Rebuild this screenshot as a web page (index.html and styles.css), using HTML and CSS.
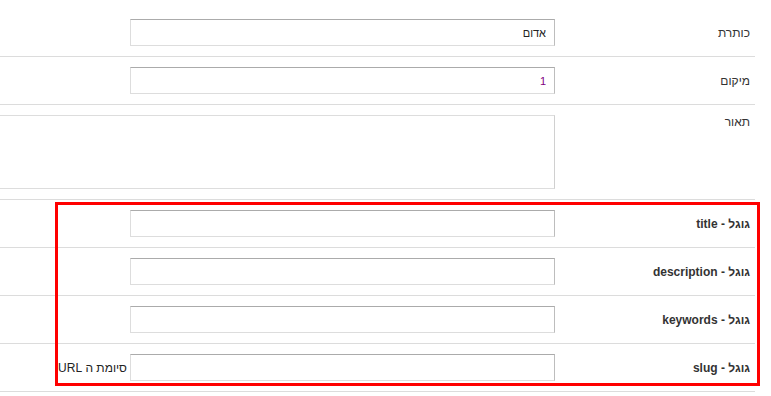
FILE: index.html
```html
<!DOCTYPE html>
<html lang="he">
<head>
  <meta charset="UTF-8" />
  <title>עריכת קטגוריה</title>
  <link rel="stylesheet" href="styles.css">
</head>
<body>
  <!-- Edit form -->
  <div class="form" dir="rtl">
    <div class="row">
      <div class="label">כותרת</div>
      <div class="field"><input class="text-input" type="text" value="אדום"></div>
    </div>
    <div class="row">
      <div class="label">מיקום</div>
      <div class="field"><input class="text-input num" type="text" value="1"></div>
    </div>
    <div class="row row-tall">
      <div class="label">תאור</div>
      <div class="field"><textarea class="text-area"></textarea></div>
    </div>

    <!-- Google SEO fields (highlighted) -->
    <div class="seo-group">
      <div class="row">
        <div class="label bold">גוגל - title</div>
        <div class="field"><input class="text-input" type="text"></div>
      </div>
      <div class="row">
        <div class="label bold">גוגל - description</div>
        <div class="field"><input class="text-input" type="text"></div>
      </div>
      <div class="row">
        <div class="label bold">גוגל - keywords</div>
        <div class="field"><input class="text-input" type="text"></div>
      </div>
      <div class="row">
        <div class="label bold">גוגל - slug</div>
        <div class="field">
          <input class="text-input" type="text">
          <span class="suffix">סיומת ה URL</span>
        </div>
      </div>
      <div class="highlight"></div>
    </div>
  </div>
</body>
</html>
```

FILE: styles.css
```css
/* ---- Global ---- */
html, body {
  margin: 0;
  padding: 0;
  overflow: hidden;
  background: #ffffff;
  font-family: "Liberation Sans", Arial, sans-serif;
  font-size: 12px;
  color: #333333;
}

/* ---- Form table ---- */
.form {
  width: 755px;
  margin-top: 9px;
  direction: rtl;
}

.row {
  display: flex;
  align-items: center;
  height: 47px;
  border-bottom: 1px solid #dcdcdc;
}
.row-tall {
  height: 94px;
  align-items: flex-start;
}
.row-tall .label {
  padding-top: 10px;
}

.label {
  width: 195px;
  padding-right: 5px;
  flex-shrink: 0;
  line-height: 14px;
}
.bold {
  font-weight: bold;
}

.field {
  display: flex;
  align-items: center;
  gap: 3px;
}
.row-tall .field {
  padding-top: 10px;
}

.text-input {
  box-sizing: border-box;
  width: 425px;
  height: 27px;
  margin: 0;
  padding: 0 8px;
  border: 1px solid #dddddd;
  border-top-color: #ababab;
  border-right-color: #bdbdbd;
  font-family: "Liberation Sans", Arial, sans-serif;
  font-size: 11px;
  color: #222;
  text-align: right;
  direction: rtl;
  background: #fff;
  outline: none;
}
.num {
  color: #800080;
}

.text-area {
  box-sizing: border-box;
  display: block;
  width: 640px;
  height: 74px;
  margin: 0;
  padding: 0;
  border: 1px solid #dddddd;
  border-right-color: #d0d0d0;
  resize: none;
  background: #fff;
}

.suffix {
  white-space: nowrap;
  font-size: 12px;
  color: #222;
}

/* ---- Red highlight frame over the SEO rows ---- */
.seo-group {
  position: relative;
}
.highlight {
  position: absolute;
  top: 2px;
  bottom: 6px;
  left: 55px;
  right: -5px;
  border: 3px solid #ff0000;
  pointer-events: none;
}
```
